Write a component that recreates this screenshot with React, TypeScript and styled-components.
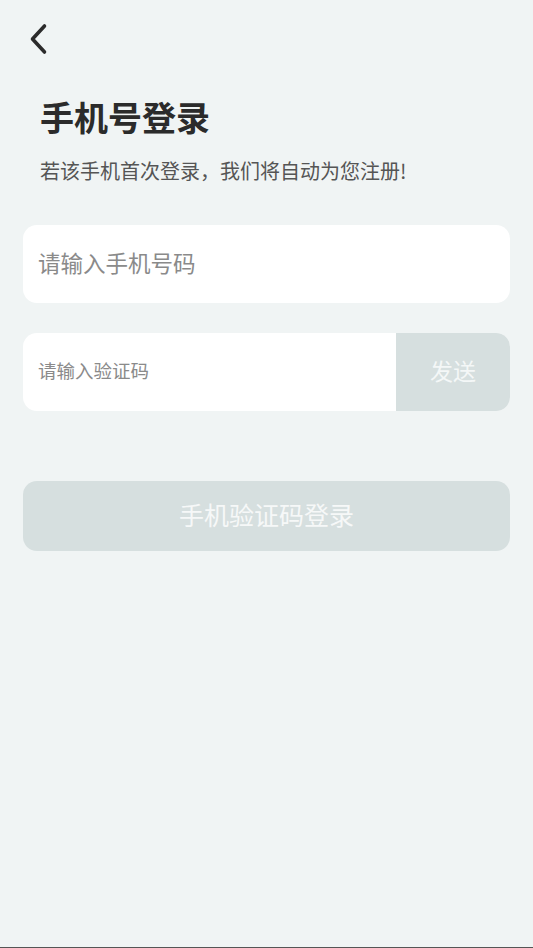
import React, { useState } from 'react';
import styled, { createGlobalStyle } from 'styled-components';

const GlobalStyle = createGlobalStyle`
  html, body {
    margin: 0;
    padding: 0;
    background: #f0f4f4;
    font-family: 'Noto Sans CJK SC', 'Noto Sans', sans-serif;
  }
`;

const Page = styled.div`
  height: 947px;
  border-bottom: 1px solid #555;
  background: #f0f4f4;
  display: flex;
  flex-direction: column;
  padding: 0 23px 0 23px;
`;

const BackButton = styled.button`
  width: 40px;
  height: 40px;
  margin: 19px 0 0 -4px;
  padding: 0;
  border: none;
  background: none;
  display: flex;
  align-items: center;
  justify-content: center;
  cursor: pointer;
`;

const Header = styled.div`
  padding: 0 0 0 17px;
  margin-top: 35px;
`;

const Title = styled.h1`
  margin: 0;
  font-size: 34px;
  line-height: 46px;
  font-weight: 700;
  color: #2b2b2b;
`;

const Subtitle = styled.p`
  margin: 17px 0 0;
  font-size: 20px;
  line-height: 28px;
  color: #555;
`;

const Field = styled.div<{ $top: number }>`
  height: 78px;
  background: #fff;
  border-radius: 14px;
  display: flex;
  align-items: stretch;
  overflow: hidden;
  margin-top: ${(p) => p.$top}px;
`;

const Input = styled.input<{ $size: number }>`
  flex: 1;
  min-width: 0;
  border: none;
  outline: none;
  background: transparent;
  padding: 0 15px 5px;
  font-family: inherit;
  font-size: ${(p) => p.$size}px;
  color: #333;

  &::placeholder {
    color: #8a8a8a;
  }
`;

const SendButton = styled.button`
  width: 114px;
  border: none;
  padding: 0 0 4px;
  background: #d6dfdf;
  color: #f4f7f7;
  font-family: inherit;
  font-size: 23px;
  cursor: pointer;
`;

const LoginButton = styled.button`
  margin-top: 70px;
  height: 70px;
  width: 487px;
  border: none;
  padding: 0 0 4px;
  border-radius: 14px;
  background: #d6dfdf;
  color: #f6f8f8;
  font-family: inherit;
  font-size: 25px;
  cursor: pointer;
`;

const App: React.FC = () => {
  const [phone, setPhone] = useState('');
  const [code, setCode] = useState('');

  return (
    <>
      <GlobalStyle />
      <Page>
        <BackButton aria-label="返回">
          <svg width="24" height="32" viewBox="0 0 24 32" fill="none">
            <path d="M17.5 3 L5.5 16 L17.5 29" stroke="#2b2b2b" strokeWidth="3.6" strokeLinecap="round" strokeLinejoin="round" />
          </svg>
        </BackButton>
        <Header>
          <Title>手机号登录</Title>
          <Subtitle>若该手机首次登录，我们将自动为您注册!</Subtitle>
        </Header>
        <Field $top={40}>
          <Input
            $size={22.5}
            placeholder="请输入手机号码"
            value={phone}
            onChange={(e) => setPhone(e.target.value)}
          />
        </Field>
        <Field $top={30}>
          <Input
            $size={18.5}
            placeholder="请输入验证码"
            value={code}
            onChange={(e) => setCode(e.target.value)}
          />
          <SendButton>发送</SendButton>
        </Field>
        <LoginButton>手机验证码登录</LoginButton>
      </Page>
    </>
  );
};

export default App;
